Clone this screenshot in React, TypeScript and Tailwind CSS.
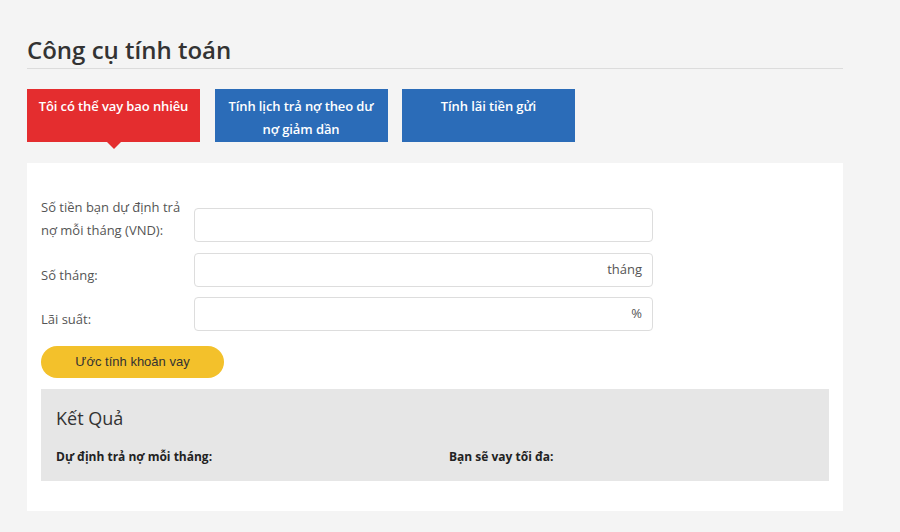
import React from 'react';

const tabs = [
  { id: 'vay', label: 'Tôi có thể vay bao nhiêu' },
  { id: 'lich', label: 'Tính lịch trả nợ theo dư nợ giảm dần' },
  { id: 'gui', label: 'Tính lãi tiền gửi' },
];

const Field: React.FC<{ label: React.ReactNode; suffix?: string }> = ({ label, suffix }) => (
  <div className="flex items-end">
    <label className="w-[153px] shrink-0 text-[13px] leading-[23px] text-[#555]">{label}</label>
    <div className="flex h-[34px] w-[459px] items-center justify-end rounded-[4px] border border-[#dddddd] bg-white px-[10px] text-[13px] text-[#555]">
      {suffix}
    </div>
  </div>
);

export default function App() {
  const [active, setActive] = React.useState('vay');

  return (
    <div
      className="min-h-[532px] w-full bg-[#f4f4f4] pl-[27px] pr-[57px] pt-[35px]"
      style={{ fontFamily: '"Open Sans", "Noto Sans", sans-serif' }}
    >
      {/* Heading */}
      <h2 className="border-b border-[#dcdcdc] pb-[3px] text-[24px] font-semibold leading-[30px] text-[#333]">Công cụ tính toán</h2>

      {/* Tabs */}
      <div className="mt-[20px] flex items-start gap-[14.5px]">
        {tabs.map((tab) => (
          <button
            key={tab.id}
            onClick={() => setActive(tab.id)}
            className={`relative h-[53px] w-[173px] px-[10px] pt-[6px] text-center text-[13px] font-semibold leading-[23px] tracking-[-0.1px] text-white ${
              active === tab.id ? 'bg-[#e42d2f]' : 'bg-[#2b6cb8]'
            }`}
          >
            <div className="flex h-full items-start justify-center">{tab.label}</div>
            {active === tab.id && (
              <span className="absolute left-1/2 top-full h-0 w-0 -translate-x-1/2 border-x-[7px] border-t-[7px] border-x-transparent border-t-[#e42d2f]" />
            )}
          </button>
        ))}
      </div>

      {/* Panel */}
      <div className="mt-[21px] bg-white px-[14px] pb-[30px] pt-[33px]">
        <div className="flex flex-col gap-[10.5px]">
          <Field label={<>Số tiền bạn dự định trả<br />nợ mỗi tháng (VND):</>} />
          <Field label="Số tháng:" suffix="tháng" />
          <Field label="Lãi suất:" suffix="%" />
        </div>

        <button
          className="mt-[15px] h-[32px] w-[183px] rounded-full bg-[#f3c12b] text-[13px] text-[#333]"
          style={{ fontFamily: '"Liberation Sans", Arial, sans-serif' }}
        >
          Ước tính khoản vay
        </button>

        <div className="mt-[11px] bg-[#e6e6e6] px-[15px] pb-[15px] pt-[17px]">
          <h3 className="text-[18px] leading-[24px] text-[#333]">Kết Quả</h3>
          <div className="mt-[18px] flex text-[12px] font-bold leading-[18px] text-[#222]">
            <span className="w-[393px]">Dự định trả nợ mỗi tháng:</span>
            <span>Bạn sẽ vay tối đa:</span>
          </div>
        </div>
      </div>
    </div>
  );
}
